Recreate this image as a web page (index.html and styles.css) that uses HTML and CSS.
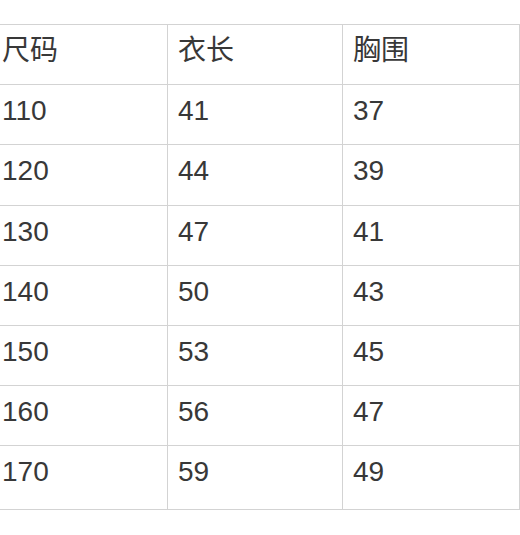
FILE: index.html
```html
<!DOCTYPE html>
<html lang="zh">
<head>
<meta charset="utf-8">
<link rel="stylesheet" href="styles.css">
</head>
<body>
<table class="size-table">
  <colgroup>
    <col class="c1"><col class="c2"><col class="c3">
  </colgroup>
  <tr><td>尺码</td><td>衣长</td><td>胸围</td></tr>
  <tr><td>110</td><td>41</td><td>37</td></tr>
  <tr class="tall"><td>120</td><td>44</td><td>39</td></tr>
  <tr><td>130</td><td>47</td><td>41</td></tr>
  <tr><td>140</td><td>50</td><td>43</td></tr>
  <tr><td>150</td><td>53</td><td>45</td></tr>
  <tr><td>160</td><td>56</td><td>47</td></tr>
  <tr class="last"><td>170</td><td>59</td><td>49</td></tr>
</table>
</body>
</html>
```

FILE: styles.css
```css
html, body {
  margin: 0;
  padding: 0;
  background: #ffffff;
  overflow: hidden;
}
body {
  width: 520px;
  height: 535px;
  font-family: "Liberation Sans", "Noto Sans CJK SC", sans-serif;
  color: #383838;
}
.size-table {
  border-collapse: collapse;
  table-layout: fixed;
  width: 528px;
  margin-left: -9px;
  margin-top: 24px;
}
.c1 { width: 176px; }
.c2 { width: 175px; }
.c3 { width: 177px; }
.size-table td {
  border: 1px solid #d3d3d3;
  height: 60px;
  box-sizing: border-box;
  padding: 10px 0 0 10px;
  vertical-align: top;
  font-size: 28px;
  line-height: 32px;
  white-space: nowrap;
}
.size-table tr.tall td {
  height: 61px;
}
.size-table tr.last td {
  height: 64px;
}
```
